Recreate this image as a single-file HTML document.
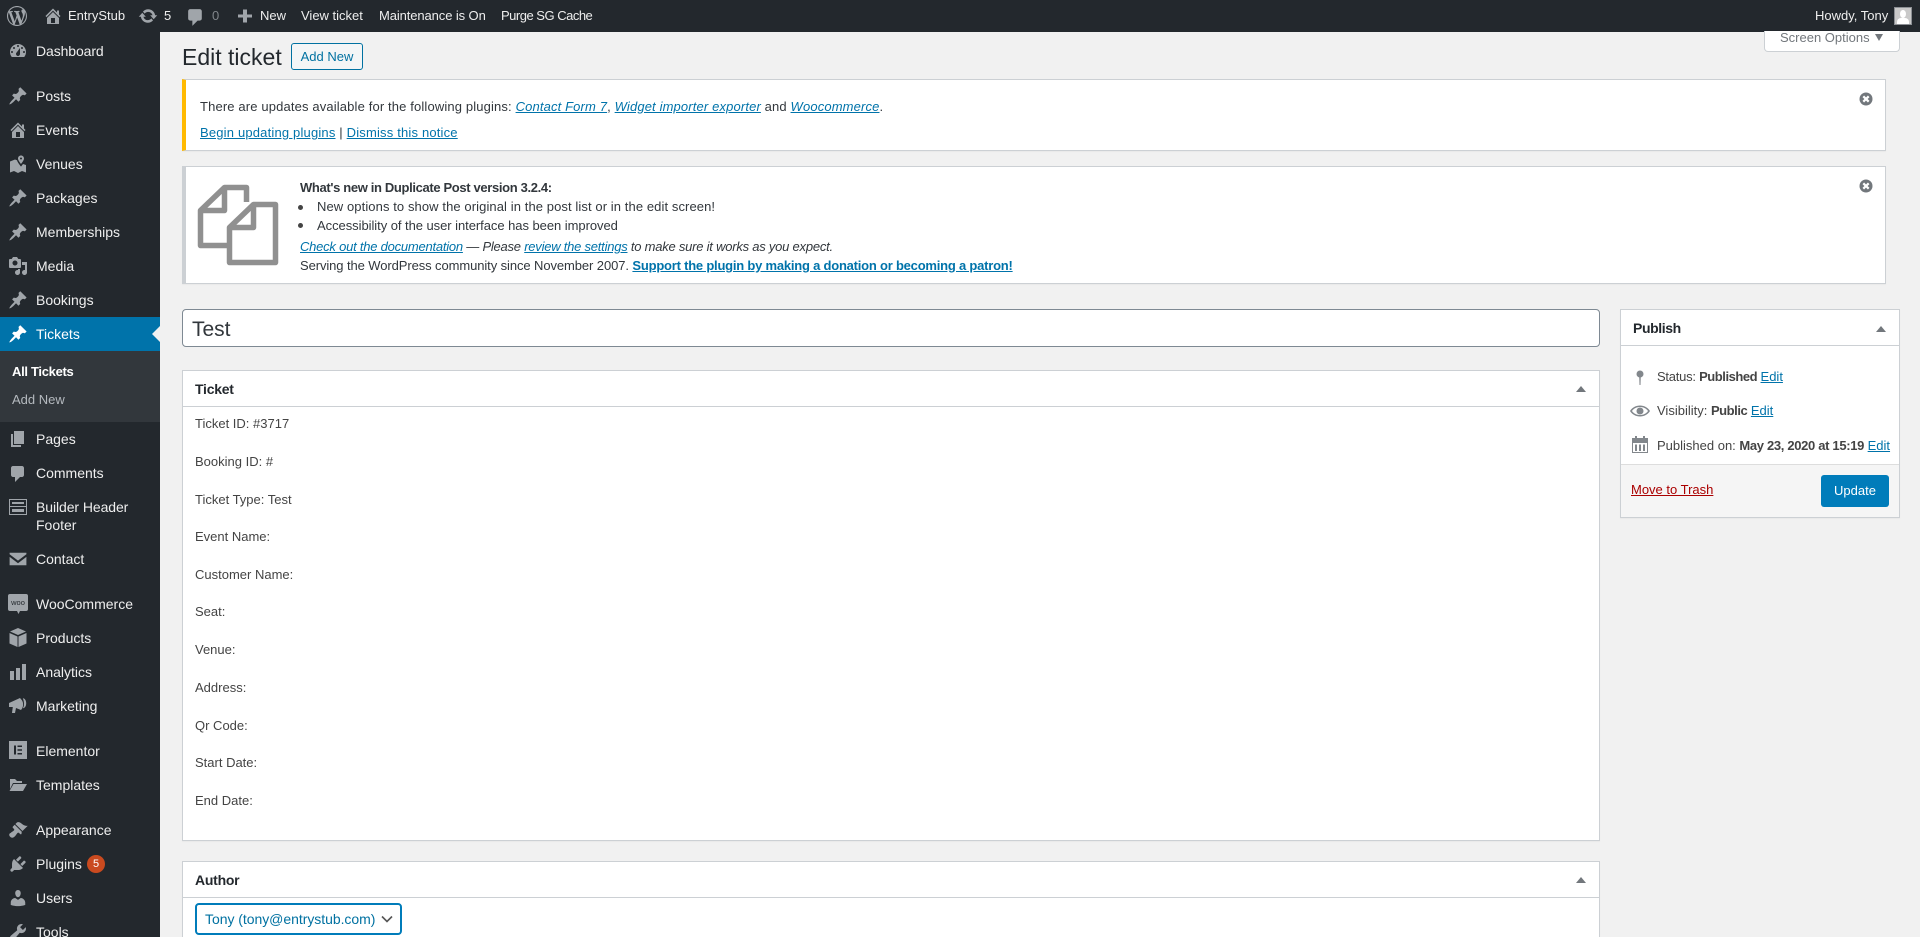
<!DOCTYPE html>
<html><head><meta charset="utf-8"><title>Edit ticket</title>
<style>
html,body{margin:0;padding:0;width:1920px;height:937px;overflow:hidden;background:#f1f1f1}
body{position:relative;font-family:"Liberation Sans",sans-serif;font-size:13px;color:#444}
div,a,span.t,b.t{box-sizing:border-box}
.a{position:absolute}
.t{position:absolute;white-space:nowrap;line-height:20px;height:20px}
a{color:#0073aa;text-decoration:underline}
svg{position:absolute;overflow:visible}
.m{color:#eee;font-size:14px;left:36px}
.b{color:#eee;font-size:13px}
.i{fill:#a0a5aa}
.box{position:absolute;background:#fff;border:1px solid #ccd0d4;box-shadow:0 1px 1px rgba(0,0,0,.04)}
.row{left:195px;color:#444}
.h{font-weight:bold;font-size:14px;color:#23282d;letter-spacing:-.25px}
.ar{position:absolute;width:0;height:0;border-left:5px solid transparent;border-right:5px solid transparent;border-bottom:6px solid #72777c}
.x{fill:#72777c}
.s b{letter-spacing:-.45px;color:#444}
</style></head><body>
<svg width="0" height="0" style="position:absolute"><defs>
<symbol id="pin" viewBox="0 0 20 20"><path d="M10.44 3.02l1.82-1.82 6.36 6.35-1.83 1.82c-1.05-.68-2.48-.57-3.41.36l-.75.75c-.92.93-1.04 2.35-.35 3.41l-1.83 1.82-2.41-2.41-2.8 2.79c-.42.42-3.38 2.71-3.8 2.29s1.86-3.39 2.28-3.81l2.79-2.79L4.1 9.36l1.83-1.82c1.05.69 2.48.57 3.4-.36l.75-.75c.93-.92 1.05-2.35.36-3.41z"/></symbol>
<symbol id="home" viewBox="0 0 20 20"><path d="M16 8.5l1.53 1.53-1.06 1.06L10 4.62l-6.47 6.47-1.06-1.06L10 2.5l4 4v-2h2v4zm-6-2.46l6 5.99V18H4v-5.97zM12 17v-5H8v5h4z"/></symbol>
<symbol id="close" viewBox="0 0 14 14"><circle cx="7" cy="7" r="6.5" fill="#72777c"/><path d="M4.3 4.3l5.4 5.4M9.7 4.3l-5.4 5.4" stroke="#fff" stroke-width="2.2" fill="none"/></symbol>
</defs></svg>

<!-- admin bar -->
<div class="a" style="left:0;top:0;width:1920px;height:32px;background:#23282d"></div>
<svg class="i" style="left:7px;top:6px" width="20" height="20" viewBox="0 0 20 20"><path d="M20 10c0-5.51-4.49-10-10-10C4.48 0 0 4.49 0 10c0 5.52 4.48 10 10 10 5.51 0 10-4.48 10-10zM7.78 15.37L4.37 6.22c.55-.02 1.17-.08 1.17-.08.5-.06.44-1.13-.06-1.11 0 0-1.45.11-2.37.11-.18 0-.37 0-.58-.01C4.12 2.69 6.87 1.11 10 1.11c2.33 0 4.45.87 6.05 2.34-.68-.11-1.65.39-1.65 1.58 0 .74.45 1.36.9 2.1.35.61.55 1.36.55 2.46 0 1.49-1.4 5-1.4 5l-3.03-8.37c.54-.02.82-.17.82-.17.5-.05.44-1.25-.06-1.22 0 0-1.44.12-2.38.12-.87 0-2.33-.12-2.33-.12-.5-.03-.56 1.2-.06 1.22l.92.08 1.26 3.41zM17.41 10c.24-.64.74-1.87.43-4.25.7 1.29 1.05 2.71 1.05 4.25 0 3.29-1.73 6.24-4.4 7.78.97-2.59 1.94-5.2 2.92-7.78zM6.1 18.09C3.12 16.65 1.11 13.53 1.11 10c0-1.3.23-2.48.72-3.59C3.25 10.3 4.67 14.2 6.1 18.09zm4.03-6.63l2.58 6.98c-.86.29-1.76.45-2.71.45-.79 0-1.57-.11-2.29-.33.81-2.38 1.62-4.74 2.42-7.1z"/></svg>
<svg class="i" style="left:43px;top:6px" width="20" height="20"><use href="#home"/></svg>
<span class="t b" style="left:68px;top:6px">EntryStub</span>
<svg class="i" style="left:138px;top:6px" width="20" height="20" viewBox="0 0 20 20"><path d="M10.2 3.28c3.53 0 6.43 2.61 6.92 6h2.08l-3.5 4-3.5-4h2.32c-.45-1.97-2.21-3.45-4.32-3.45-1.45 0-2.73.71-3.54 1.78L4.95 5.66C6.23 4.2 8.11 3.28 10.2 3.28zm-.4 13.44c-3.52 0-6.43-2.61-6.92-6H.8l3.5-4c1.17 1.33 2.33 2.67 3.5 4H5.48c.45 1.97 2.21 3.45 4.32 3.45 1.45 0 2.73-.71 3.54-1.78l1.71 1.95c-1.28 1.46-3.15 2.38-5.25 2.38z"/></svg>
<span class="t b" style="left:164px;top:6px">5</span>
<svg class="i" style="left:185px;top:7px" width="21" height="21" viewBox="0 0 20 20"><path d="M5 2h9c1.1 0 2 .9 2 2v7c0 1.100-.9 2-2 2h-2l-5 5v-5H5c-1.100 0-2-.9-2-2V4c0-1.100.9-2 2-2z"/></svg>
<span class="t" style="left:212px;top:6px;color:#a0a5aa;opacity:.75">0</span>
<svg class="i" style="left:235px;top:6px" width="20" height="20" viewBox="0 0 20 20"><path d="M17 7v3h-5v5H8v-5H3V7h5V2h4v5h5z" transform="translate(0 1.500)"/></svg>
<span class="t b" style="left:260px;top:6px">New</span>
<span class="t b" style="left:301px;top:6px">View ticket</span>
<span class="t b" style="left:379px;top:6px;letter-spacing:-.1px">Maintenance is On</span>
<span class="t b" style="left:501px;top:6px;letter-spacing:-.5px">Purge SG Cache</span>
<span class="t b" style="left:1815px;top:6px">Howdy, Tony</span>
<div class="a" style="left:1894px;top:7px;width:18px;height:18px;background:#c9c9c9;border:1px solid #8c8f94;overflow:hidden"><div class="a" style="left:5px;top:2px;width:6px;height:8px;background:#fff;border-radius:50%"></div><div class="a" style="left:2px;top:10px;width:12px;height:8px;background:#fff;border-radius:4px 4px 0 0"></div></div>

<!-- sidebar -->
<div class="a" style="left:0;top:32px;width:160px;height:905px;background:#23282d"></div>
<div class="a" style="left:0;top:317px;width:160px;height:34px;background:#0073aa"></div>
<div class="a" style="left:0;top:351px;width:160px;height:71px;background:#32373c"></div>
<div class="a" style="left:152px;top:326px;width:0;height:0;border:8px solid transparent;border-left:0;border-right-color:#f1f1f1"></div>

<svg class="i" style="left:8px;top:41px" width="20" height="20" viewBox="0 0 20 20"><path fill-rule="evenodd" d="M3.760 16h12.480c1.100-1.370 1.760-3.110 1.760-5 0-4.420-3.580-8-8-8s-8 3.580-8 8c0 1.890.66 3.630 1.760 5zM10 4c.55 0 1 .45 1 1s-.45 1-1 1-1-.45-1-1 .45-1 1-1zM6 6c.55 0 1 .45 1 1s-.45 1-1 1-1-.45-1-1 .45-1 1-1zm8 0c.55 0 1 .45 1 1s-.45 1-1 1-1-.45-1-1 .45-1 1-1zm-5.370 5.550L12 7v6c0 1.100-.9 2-2 2s-2-.9-2-2c0-.57.24-1.080.63-1.450zM4 10c.55 0 1 .45 1 1s-.45 1-1 1-1-.45-1-1 .45-1 1-1zm12 0c.55 0 1 .45 1 1s-.45 1-1 1-1-.45-1-1 .45-1 1-1z"/></svg>
<span class="t m" style="top:41px;letter-spacing:-.1px">Dashboard</span>
<svg class="i" style="left:8px;top:86px" width="20" height="20"><use href="#pin"/></svg>
<span class="t m" style="top:86px">Posts</span>
<svg class="i" style="left:8px;top:120px" width="20" height="20"><use href="#home"/></svg>
<span class="t m" style="top:120px">Events</span>
<svg class="i" style="left:8px;top:154px" width="20" height="20" viewBox="0 0 20 20"><path fill-rule="evenodd" d="M13 1.500c1.700 0 3 1.300 3 3 0 1.600-1.800 4-3 5.500-1.200-1.500-3-3.900-3-5.500 0-1.700 1.300-3 3-3zm0 2a1 1 0 100 2 1 1 0 000-2zM2 7.500l5-2 2 .8c.4 1.600 1.800 3.600 3.300 5.400l.7.900.7-.9 1.300-1.700 3 1v7.500l-4-1.500-4 2-4-2-4 1.500z"/></svg>
<span class="t m" style="top:154px">Venues</span>
<svg class="i" style="left:8px;top:188px" width="20" height="20"><use href="#pin"/></svg>
<span class="t m" style="top:188px">Packages</span>
<svg class="i" style="left:8px;top:222px" width="20" height="20"><use href="#pin"/></svg>
<span class="t m" style="top:222px">Memberships</span>
<svg class="i" style="left:8px;top:256px" width="20" height="20" viewBox="0 0 20 20"><path fill-rule="evenodd" d="M13 11V4c0-.55-.45-1-1-1h-1.670L9 1H5L3.670 3H2c-.55 0-1 .45-1 1v7c0 .55.45 1 1 1h10c.55 0 1-.45 1-1zM7 4.500c1.380 0 2.500 1.120 2.500 2.500S8.380 9.500 7 9.500 4.500 8.380 4.500 7 5.620 4.500 7 4.500zM14 6h5v10.500c0 1.380-1.120 2.500-2.500 2.500S14 17.880 14 16.500s1.120-2.500 2.500-2.500c.17 0 .34.020.5.050V9h-3V6zm-4 8.050V13h2v3.500c0 1.380-1.120 2.500-2.500 2.500S7 17.880 7 16.500 8.120 14 9.500 14c.17 0 .34.020.5.050z"/></svg>
<span class="t m" style="top:256px">Media</span>
<svg class="i" style="left:8px;top:290px" width="20" height="20"><use href="#pin"/></svg>
<span class="t m" style="top:290px">Bookings</span>
<svg style="left:8px;top:324px;fill:#fff" width="20" height="20"><use href="#pin"/></svg>
<span class="t m" style="top:324px;color:#fff">Tickets</span>
<b class="t" style="left:12px;top:362px;color:#fff;font-size:13px;letter-spacing:-.3px">All Tickets</b>
<span class="t" style="left:12px;top:390px;color:#b4b9be;font-size:13px">Add New</span>
<svg class="i" style="left:8px;top:429px" width="20" height="20" viewBox="0 0 20 20"><path d="M6 15V2h10v13H6zm-1 1h8v2H3V5h2v11z"/></svg>
<span class="t m" style="top:429px">Pages</span>
<svg class="i" style="left:8px;top:464px" width="20" height="20" viewBox="0 0 20 20"><path d="M5 2h9c1.100 0 2 .9 2 2v7c0 1.100-.9 2-2 2h-2l-5 5v-5H5c-1.100 0-2-.9-2-2V4c0-1.100.9-2 2-2z"/></svg>
<span class="t m" style="top:463px">Comments</span>
<svg style="left:9px;top:499px" width="18" height="16" viewBox="0 0 18 16"><g fill="none" stroke="#a0a5aa"><rect x=".5" y=".5" width="17" height="15"/><path d="M.5 7.500h17"/></g><path d="M3 3h12v2H3zM3 10h12v3H3z" fill="#a0a5aa"/></svg>
<span class="t m" style="top:497px;letter-spacing:-.08px">Builder Header</span>
<span class="t m" style="top:515px">Footer</span>
<svg class="i" style="left:8px;top:549px" width="20" height="20" viewBox="0 0 20 20"><path d="M2 4h16v1.500l-8 6-8-6zM2 8l8 6 8-6v8H2z" transform="translate(-.5 -.5) scale(1.050)"/></svg>
<span class="t m" style="top:549px">Contact</span>
<svg style="left:8px;top:594px" width="20" height="20" viewBox="0 0 20 20"><path class="i" d="M2 0h16a2 2 0 012 2v13a2 2 0 01-2 2h-6l-1.500 3-1.500-3H2a2 2 0 01-2-2V2a2 2 0 012-2z"/><text x="10" y="11" text-anchor="middle" font-size="7.500" fill="#23282d" font-family="Liberation Sans,sans-serif">woo</text></svg>
<span class="t m" style="top:594px">WooCommerce</span>
<svg class="i" style="left:8px;top:628px" width="20" height="20" viewBox="0 0 20 20"><path d="M10 0l8 3.500L10 7 2 3.500zM1.500 5l8 3.500V19l-8-3.500zM18.500 5v10.500l-8 3.500V8.500z"/></svg>
<span class="t m" style="top:628px">Products</span>
<svg class="i" style="left:8px;top:662px" width="20" height="20" viewBox="0 0 20 20"><path d="M2 9h4v9H2zM8 6h4v12H8zM14 2h4v16h-4z"/></svg>
<span class="t m" style="top:662px">Analytics</span>
<svg class="i" style="left:8px;top:696px" width="20" height="20" viewBox="0 0 20 20"><path fill-rule="evenodd" d="M1 7l11-5c.6 1 2.500 2 3 5s-.6 5.500-2 7l-5-2-1 5H4l.8-6L1 11zM14.800 2.200c2 0 3.400 2.200 3.400 5s-1.400 5-3.400 5c.9-1.300 1.400-3 1.200-5-.2-2-.6-3.700-1.200-5z"/></svg>
<span class="t m" style="top:696px">Marketing</span>
<svg style="left:9px;top:741px" width="18" height="18" viewBox="0 0 18 18"><rect width="18" height="18" class="i"/><path d="M5 4.500h2v9H5zM8.500 4.500H13V6H8.500zM8.500 8.200H13v1.600H8.500zM8.500 12H13v1.500H8.500z" fill="#23282d"/></svg>
<span class="t m" style="top:741px">Elementor</span>
<svg class="i" style="left:8px;top:775px" width="20" height="20" viewBox="0 0 20 20"><path d="M2 4h5l2 2h5v2H5l-3 6zM1.500 16L5.500 9H19l-4 7z"/></svg>
<span class="t m" style="top:775px">Templates</span>
<svg class="i" style="left:8px;top:820px" width="20" height="20" viewBox="0 0 20 20"><path d="M14.480 11.060L7.410 3.990l1.500-1.500c.5-.56 2.300-.47 3.510.32 1.210.8 1.430 1.280 2.910 2.100 1.180.64 2.450 1.260 4.450.85zm-.71.71L6.700 4.700 4.930 6.470c-.39.39-.39 1.020 0 1.410l1.060 1.060c.39.39.39 1.030 0 1.420-.6.6-1.430 1.110-2.210 1.690-.35.26-.7.53-1.010.84C1.430 13.230.4 14.960 2.200 16.760s3.500.77 4.870-.62c.31-.31.58-.66.84-1.010.58-.78 1.090-1.610 1.690-2.210.39-.39 1.020-.39 1.410 0l1.060 1.060c.39.39 1.020.39 1.410 0z"/></svg>
<span class="t m" style="top:820px">Appearance</span>
<svg class="i" style="left:8px;top:854px" width="20" height="20" viewBox="0 0 20 20"><path d="M13.110 4.360L9.870 7.600 8 5.730l3.240-3.240c.35-.34 1.050-.2 1.560.32.52.51.66 1.210.31 1.550zm-8 1.770l.91-1.120 9.010 9.010-1.190.84c-.71.71-2.630 1.160-3.820 1.160H6.140L4.900 17.260c-.59.59-1.540.59-2.120 0-.59-.58-.59-1.530 0-2.120l1.240-1.240v-3.880c0-1.130.4-3.190 1.090-3.890zm7.260 3.970l3.240-3.240c.34-.35 1.040-.21 1.550.31.52.51.66 1.210.31 1.550l-3.240 3.250z"/></svg>
<span class="t m" style="top:854px">Plugins</span>
<div class="a" style="left:87px;top:855px;width:18px;height:18px;border-radius:50%;background:#ca4a1f;color:#fff;font-size:11px;line-height:18px;text-align:center">5</div>
<svg class="i" style="left:8px;top:888px" width="20" height="20" viewBox="0 0 20 20"><path d="M10 9.250c-2.270 0-2.730-3.440-2.730-3.440C7 4.020 7.820 2 9.970 2c2.160 0 2.980 2.020 2.710 3.810 0 0-.41 3.440-2.680 3.440zm0 2.570L12.720 10c2.390 0 4.520 2.330 4.520 4.530v2.490s-3.650 1.130-7.240 1.130c-3.650 0-7.240-1.130-7.240-1.130v-2.490c0-2.250 1.940-4.480 4.470-4.480z"/></svg>
<span class="t m" style="top:888px">Users</span>
<svg class="i" style="left:8px;top:922px" width="20" height="20" viewBox="0 0 20 20"><path fill-rule="evenodd" d="M16.680 9.770c-1.340 1.340-3.300 1.670-4.950.99l-5.410 6.520c-.99.99-2.590.99-3.580 0s-.99-2.590 0-3.570l6.520-5.420c-.68-1.650-.35-3.610.99-4.950 1.280-1.280 3.120-1.620 4.720-1.060l-2.890 2.890 2.820 2.820 2.860-2.870c.53 1.580.18 3.390-1.080 4.650z"/></svg>
<span class="t m" style="top:922px">Tools</span>

<!-- screen options -->
<div class="a" style="left:1764px;top:31px;width:136px;height:21px;background:#fff;border:1px solid #ccd0d4;border-top:0;border-radius:0 0 4px 4px"></div>
<span class="t" style="left:1780px;top:28px;color:#72777c;font-size:13px">Screen Options</span>
<div class="a" style="left:1875px;top:34px;width:0;height:0;border-left:4.500px solid transparent;border-right:4.500px solid transparent;border-top:7px solid #72777c"></div>

<!-- heading -->
<span class="t" style="left:182px;top:42px;height:30px;line-height:30px;font-size:23px;color:#23282d">Edit ticket</span>
<div class="a" style="left:291px;top:43px;width:72px;height:27px;background:#f3f5f6;border:1px solid #0071a1;border-radius:3px;color:#0071a1;font-size:13px;line-height:25px;text-align:center">Add New</div>

<!-- notice 1 -->
<div class="box" style="left:182px;top:79px;width:1704px;height:72px;border-left:4px solid #ffb900"></div>
<span class="t" style="left:200px;top:97px;color:#32373c;letter-spacing:.14px">There are updates available for the following plugins: <a href="#"><i>Contact Form 7</i></a>, <a href="#"><i>Widget importer exporter</i></a> and <a href="#"><i>Woocommerce</i></a>.</span>
<span class="t" style="left:200px;top:123px;color:#32373c;letter-spacing:.18px"><a href="#">Begin updating plugins</a> | <a href="#">Dismiss this notice</a></span>
<svg style="left:1859px;top:92px" width="14" height="14"><use href="#close"/></svg>

<!-- notice 2 -->
<div class="box" style="left:182px;top:166px;width:1704px;height:118px;border-left:4px solid #ccd0d4"></div>
<svg style="left:0;top:0" width="1920" height="937" fill="none" stroke="#909090" stroke-width="5.500" stroke-linejoin="round"><path d="M246.500 202V187.500H224.500L200.500 210.500V245.500H228M224.500 187.500V210.500H200.500"/><path d="M253.500 204.500H275.500V262.500H229.500V227.500L253.500 204.500V227.500H229.500"/></svg>
<b class="t" style="left:300px;top:178px;color:#32373c;font-size:13px;letter-spacing:-.35px">What's new in Duplicate Post version 3.2.4:</b>
<div class="a" style="left:298px;top:205px;width:5px;height:5px;border-radius:50%;background:#444"></div>
<span class="t" style="left:317px;top:197px;color:#32373c;letter-spacing:.09px">New options to show the original in the post list or in the edit screen!</span>
<div class="a" style="left:298px;top:223px;width:5px;height:5px;border-radius:50%;background:#444"></div>
<span class="t" style="left:317px;top:216px;color:#32373c;letter-spacing:-.05px">Accessibility of the user interface has been improved</span>
<span class="t" style="left:300px;top:237px;color:#32373c;letter-spacing:-.23px"><i><a href="#">Check out the documentation</a> — Please <a href="#">review the settings</a> to make sure it works as you expect.</i></span>
<span class="t" style="left:300px;top:256px;color:#32373c;letter-spacing:-.09px">Serving the WordPress community since November 2007. <a href="#" style="font-weight:bold;letter-spacing:-.22px">Support the plugin by making a donation or becoming a patron!</a></span>
<svg style="left:1859px;top:179px" width="14" height="14"><use href="#close"/></svg>

<!-- title -->
<div class="a" style="left:182px;top:309px;width:1418px;height:38px;background:#fff;border:1px solid #7e8993;border-radius:4px;color:#32373c;font-size:21px;line-height:40px;padding-left:9px">Test</div>

<!-- ticket box -->
<div class="box" style="left:182px;top:370px;width:1418px;height:471px"></div>
<div class="a" style="left:183px;top:406px;width:1416px;height:1px;background:#ccd0d4"></div>
<b class="t h" style="left:195px;top:379px">Ticket</b>
<div class="ar" style="left:1576px;top:386px"></div>
<span class="t row" style="top:414px">Ticket ID: #3717</span>
<span class="t row" style="top:452px">Booking ID: #</span>
<span class="t row" style="top:490px">Ticket Type: Test</span>
<span class="t row" style="top:527px">Event Name:</span>
<span class="t row" style="top:565px">Customer Name:</span>
<span class="t row" style="top:602px">Seat:</span>
<span class="t row" style="top:640px">Venue:</span>
<span class="t row" style="top:678px">Address:</span>
<span class="t row" style="top:716px">Qr Code:</span>
<span class="t row" style="top:753px">Start Date:</span>
<span class="t row" style="top:791px">End Date:</span>

<!-- author box -->
<div class="box" style="left:182px;top:861px;width:1418px;height:90px"></div>
<div class="a" style="left:183px;top:897px;width:1416px;height:1px;background:#ccd0d4"></div>
<b class="t h" style="left:195px;top:870px">Author</b>
<div class="ar" style="left:1576px;top:877px"></div>
<div class="a" style="left:195px;top:903px;width:207px;height:32px;border:2px solid #007cba;border-radius:4px;background:#fff"></div>
<span class="t" style="left:205px;top:909px;color:#0071a1;font-size:14px;letter-spacing:-.04px">Tony (tony@entrystub.com)</span>
<svg style="left:381px;top:915px" width="12" height="8"><path d="M1 1.500l5 5 5-5" fill="none" stroke="#555" stroke-width="1.600"/></svg>

<!-- publish -->
<div class="box" style="left:1620px;top:309px;width:280px;height:209px"></div>
<div class="a" style="left:1621px;top:345px;width:278px;height:1px;background:#ccd0d4"></div>
<b class="t h" style="left:1633px;top:318px;letter-spacing:-.4px">Publish</b>
<div class="ar" style="left:1876px;top:326px"></div>
<svg class="i" style="left:1630px;top:367px;fill:#82878c" width="20" height="20" viewBox="0 0 20 20"><circle cx="10" cy="7" r="3.500"/><path d="M9.200 9h1.600l-.3 9h-1z"/></svg>
<span class="t s" style="left:1657px;top:367px;letter-spacing:-.25px">Status: <b>Published</b> <a href="#" style="letter-spacing:0">Edit</a></span>
<svg style="left:1630px;top:401px" width="20" height="20" viewBox="0 0 20 20"><path fill="#82878c" fill-rule="evenodd" d="M0 10c2.500-3.800 6-5.500 10-5.500s7.500 1.700 10 5.500c-2.500 3.800-6 5.500-10 5.500S2.500 13.800 0 10zm10-4c-3 0-6.200 1.300-8 4 1.800 2.700 5 4 8 4s6.200-1.300 8-4c-1.800-2.700-5-4-8-4zm0 .5a3.500 3.500 0 110 7 3.500 3.500 0 010-7z"/></svg>
<span class="t s" style="left:1657px;top:401px">Visibility: <b>Public</b> <a href="#">Edit</a></span>
<svg style="left:1632px;top:436px" width="16" height="17" viewBox="0 0 16 17"><path fill="#82878c" fill-rule="evenodd" d="M0 2h3V0h2v2h6V0h2v2h3v15H0zm1 5v9h14V7zM3 8.500h2V15H3zm4 0h2V15H7zm4 0h2V15h-2z"/></svg>
<span class="t s" style="left:1657px;top:436px">Published on: <b style="letter-spacing:-.33px">May 23, 2020 at 15:19</b> <a href="#">Edit</a></span>
<div class="a" style="left:1621px;top:464px;width:278px;height:53px;background:#f5f5f5;border-top:1px solid #ddd"></div>
<a class="t" href="#" style="left:1631px;top:480px;color:#a00">Move to Trash</a>
<div class="a" style="left:1821px;top:475px;width:68px;height:32px;background:#007cba;border-radius:3px;color:#fff;font-size:13px;line-height:32px;text-align:center">Update</div>
</body></html>
